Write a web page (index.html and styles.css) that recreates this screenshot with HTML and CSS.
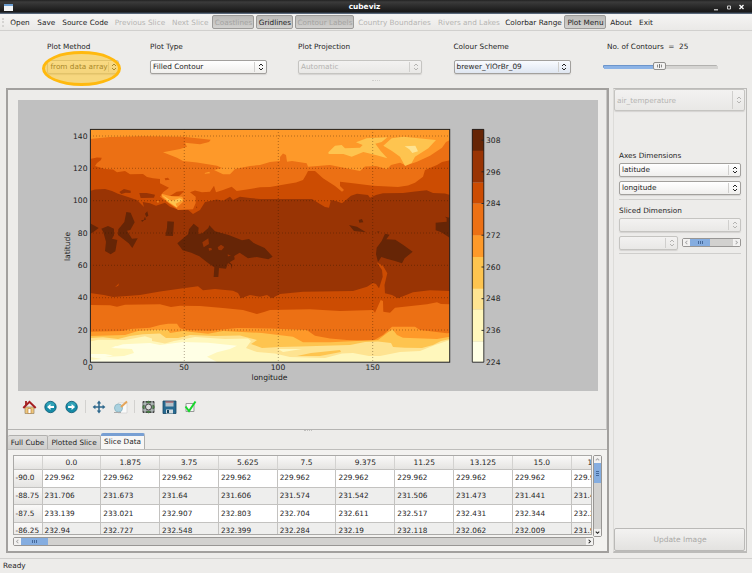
FILE: index.html
```html
<!DOCTYPE html>
<html lang="en">
<head>
<meta charset="utf-8">
<title>cubeviz</title>
<link rel="stylesheet" href="styles.css">
</head>
<body>
<svg width="0" height="0" class="defs"><defs>
<symbol id="updown" viewBox="0 0 6 8"><path d="M1 3 3 1l2 2M1 5l2 2 2-2" fill="none" stroke="currentColor" stroke-width="1"/></symbol>
</defs></svg>
<header class="titlebar">
  <svg class="app-icon" viewBox="0 0 9 7"><rect width="9" height="7" fill="#f2f4f5"/><rect width="9" height="2" fill="#6b9ed2"/></svg>
  <span class="title">cubeviz</span>
  <svg class="win-buttons" viewBox="0 0 34 10"><path d="M2 7.8h4" stroke="#ddd" stroke-width="1.2"/><path d="M15.5 4h3v3h-3z" fill="none" stroke="#ccc"/><path d="m27.500 3 4 4m0-4-4 4" stroke="#fff" stroke-width="1.3"/></svg>
</header>
<nav class="toolbar">
  <span class="grip"></span><span>Open</span><span>Save</span><span>Source Code</span><span class="off">Previous Slice</span><span class="off">Next Slice</span><span class="pressed off">Coastlines</span><span class="pressed">Gridlines</span><span class="pressed off">Contour Labels</span><span class="off">Country Boundaries</span><span class="off">Rivers and Lakes</span><span>Colorbar Range</span><span class="pressed">Plot Menu</span><span>About</span><span>Exit</span>
</nav>
<section class="params">
  <div class="param method"><label>Plot Method</label><div class="combo off"><span>from data array</span><svg><use href="#updown"/></svg></div><i class="highlight"></i></div>
  <div class="param"><label>Plot Type</label><div class="combo"><span>Filled Contour</span><svg><use href="#updown"/></svg></div></div>
  <div class="param projection"><label>Plot Projection</label><div class="combo off"><span>Automatic</span><svg><use href="#updown"/></svg></div></div>
  <div class="param"><label>Colour Scheme</label><div class="combo blue"><span>brewer_YlOrBr_09</span><svg><use href="#updown"/></svg></div></div>
  <div class="param contours"><label>No. of Contours &nbsp;= &nbsp;25</label><div class="slider"><b></b><i></i></div></div>
</section>
<div class="splitdots top"></div>
<main>
<section class="left">
  <div class="plotpane">
    <svg class="chart" viewBox="18 100 580 291">
      <rect x="18" y="100" width="580" height="291" fill="#c0c0c0"/>
      <clipPath id="axes"><rect x="90" y="129" width="360" height="233"/></clipPath>
      <g clip-path="url(#axes)">
        <rect x="90" y="129" width="360" height="233" fill="#993404"/>
        <path fill="#cc4c02" d="M90 129V191L95 189.500 105 189 112 191 118 193.700 128 197 137 200 144 207 142.700 202 150 203.300 156 205.700 165 202.700 170 206.700 177 209.300 188 209.700 193 214 200 210 205 202 210 201 216.700 199.500 223 200.700 230 196.700 233 200 240 196.700 250 198 260 199H312L320 204 325 207 329 207.700 331 200 336 201 342 203.300 346 200 351 195.700 357 193.700 368 195 370 197.700 376 195 383 193.300 403 193 415 191.500 426.700 190.300 433 193 445 193.500 450 195V129z"/>
        <path fill="#ec7014" d="M90 129V159L97 157.500 101.700 157.700 101 160 97 163 95 166 105 169 113 169.500 117 172.300 125 171 130 174.300 143 174 147 177 153 178.300 160 179 160 183.300 169 187.700 163 192.300 160 196.700 167 202 178 210 193 209.300 195.700 203V196.700L190 192.300 195 190.500 202 192.300 210 191.700 214 185.700 216 192.300 223 190 231.700 186.700 236.700 191 250 189 260 187.300 270 187 287 184 296 182.500 303 180 306 175 308 171 315 171 323 178.300 335 186 342 191.700 344 190 340 186V181.700L353 183.300 373 185.700 398 187 408 185.500 415 182.700 423 176.700 425 170 437 165 442 162 450 160.300V129z"/>
        <path fill="#fe9929" d="M90 129V139L110 137 143 136.300 183 136.700 210.700 139.700 209 142 200 144.300 185 142.700 187 146.700 180 149 163 152.300 170 155 177 157.700 183 161 197 162.500 217 165.700 222 168 214 170 223 174.300 230 174.300 235 169 250 166 260 165 270 162 280 161 280 157 283 153.500 286 155 287 161.700 292 161 306.700 163.300 308 166.700 330 165 345 168 360 171 365 166.500 376 166 387 169.300 391 165 400 162.700 406 165.500 417 161.700 430 155.700 442 147.700 446 142 450 140V129z"/>
        <g transform="translate(260 115) scale(.33333)">
          <path fill="#fec44f" d="M205 112 225 92 245 90 255 100 300 98 308 90 288 82 320 70 382 67 365 81 346 86 362 108 382 130 350 121 310 111 275 125 250 117 206 117zM370 92 395 70 430 65 528 75 505 100 465 125 455 144 435 153 420 125 396 108z"/>
          <path fill="#fee391" d="m434 94 32-2 8 17-17 5-9-11z"/>
          <path fill="#662506" d="m267 330 24 5 16 10 11 7-36-4zM296 315l10-3 4 10-12 1zM350 350l9-1-4 4zM375 356l14 3-10 14 27 1 24 16 28 20-24 20-8 15-21-7-25-7-16-5-10 15-6-23 2-20 15-20zM527 323l33-3v-10l-5-5 14 3v60l-25-16-17-6z"/>
        </g>
        <g transform="translate(50 115) scale(.33333)">
          <path fill="#662506" d="m120 325 26 14-15 11-11 8zM154 341l20-8 18 8v20l-6 10 16 4-6 34-14 9-17-10 3-28-8-28zM229 291l13 2 12 29-13 23-10 2 15 24 17-1-16 29-11-14-32-25 1-17 18-22zM292 289l3 13-6 4-4-10zM285 305l3 9-7 1zM274 315h9l-7 6zM352 319l20 1-3 43-23-1 5-24zM382 385l32-27 3-15 14-17 15 12-2 19 13-2 18-16 3-8 17 18 41 11 40 16 21-4 14 12 33 15 24 26-13 8-35-7-26 4-25-17-20 12-16-7 2 23-7 20-21-2-2 27h-14l2-29-16-11-29-22-24-11-26-7z"/>
          <path fill="#993404" d="m457 382 18-12 2 17-16 10zM503 397l10-8 10 7-8 10-9-1zM476 399h8l2 6-9 2zM208 231l14-9 20 5v7l-15-1-13 4zM268 234l22 0 25 5-3 9-40 1zM438 274l4 3-3 3z"/>
          <path fill="#662506" d="m530 425 22-6 2 14-15 9 8 7-2 14-2-14-15-8z"/>
          <path fill="#cc4c02" d="m344 190 10-2 5 6-13 2zM356 245l24-15 24-3-17 16-20 3zM195 517l12-12-2 7z"/>
          <path fill="#fe9929" d="m335 236 25 7 37 2 5 13-22 20-24-15-20-17zM464 174l14-4 2 5-15 1zM319 260l7-2-1 5z"/>
          <path fill="#fec44f" d="m336 240 14 8 14 10 25-8 10 5-22 11 5 12-25-17z"/>
        </g>
        <path fill="#cc4c02" d="M90 293 104 295 113 297 140 295 160 291.500 183 288.300 198 286.300 203 290.300 215 289 233 290.700 238 293 241 298.300 250 295 260 296.700 267 295 272 298.300 280 294 303 291.700 353 291 367 286.700 373 283 376 284 379 288.300 382.700 276.700 382 270 376.700 262.300 383 265.700 387.300 273.300 384.500 285 385 293.300 392 295 398 298.300 413 292.300 430 290.300 450 291V362H90z"/>
        <path fill="#ec7014" d="M90 305 110 305.300 117 306.700 125 304.700 160 304.300 171 307 180 305.700 200 306 223 308 243 310 257 314 264 312 270 310 310 309.300 340 311 373 310 375 312.700 380.700 300 383 301 383.300 311.700 390 312.700 395 307.700 427 304.300 437 302.300 441 304 450 304.300V362H90z"/>
        <path fill="#fe9929" d="M90 331.700 123 331 130 329 150 327.700 160 325 168 323.700 177 323.700 180 328.300 187 330 210 330.700 237 328 270 328.500 306.700 330 315 335.700 330 338.500 347 340 373 340.700 383 335 392 326.700 415 326.700 420 330 447 333.300 450 333V362H90z"/>
        <path fill="#fec44f" d="M90 336 125 335 138 331 157 329.700 168 330 170 333 183 331 208 333.700 223 331 262 333 293 336.700 303 342.300 330 342.300 378 340 388 332.300 392.700 329.500 397 335 403 337.700 437 339 450 336.700V362H90z"/>
        <path fill="#fee391" d="M90 338 103 337.300 118 339 130 336 143 334.300 160 333.500 166 338 178 338 190 335 215 336 240 335.500 257 340 251 344 262 348 280 347 300 346.500 350 345 365 342 378 341.500 391 343 393 347 405 347.700 422 348 433 345 441 341 450 339V362H90z"/>
        <path fill="#fff7bc" d="M90 341.500 98 339.700 125 340 145 336.300 152 338.500 152 341 165 343.500 174 341 195 337 225 339 248 338.500 251 341 246 348 257 352 275 353.500 290 357 325 358 342 353.500 353 353 369 356 380 356 400 352 420 351 435 345 450 340V362H90z"/>
        <path fill="#ffffe5" d="M90 354 105 354 113 355.500 105 357 124 356 134 353 132 349 111 348 123 344.300 150 343 160 345 183 342 208 342.700 237 345.700 230 349 217 352.300 207 356.700 217 362H90V360L102 359 90 357zM113 346l7 .3-2 1.300z"/>
        <path fill="#fff7bc" d="m278 349 24 0-19 3z"/>
        <path fill="#fec44f" d="m297 356 14-3 29-3 1 2-21 4z"/>
      </g>
      <g class="grid"><path d="M90 136H450M90 168.300H450M90 200.700H450M90 233H450M90 265.300H450M90 297.700H450M90 330H450M184.300 129V362M278.300 129V362M372.700 129V362"/></g>
      <rect x="90.400" y="129.400" width="359.300" height="232.800" fill="none" stroke="#222"/>
      <g>
        <path fill="#662506" d="M472 129h12v22h-12z"/><path fill="#993404" d="M472 150.700h12v32h-12z"/><path fill="#cc4c02" d="M472 182.700h12v21h-12z"/><path fill="#ec7014" d="M472 203.700h12v32h-12z"/><path fill="#fe9929" d="M472 235.300h12v22h-12z"/><path fill="#fec44f" d="M472 257h12v32h-12z"/><path fill="#fee391" d="M472 288.700h12v21h-12z"/><path fill="#fff7bc" d="M472 309.700h12v32h-12z"/><path fill="#ffffe5" d="M472 341.700h12v20.300h-12z"/>
        <path fill="none" stroke="#222" stroke-width=".9" d="M472.300 129.400h11.500v232.800h-11.500zM481.500 140.200h2.500M481.500 171.800h2.500M481.500 203.500h2.500M481.500 235.200h2.500M481.500 267h2.500M481.500 298.700h2.500M481.500 330.400h2.500"/>
      </g>
      <g class="axis end"><text x="87.500" y="138.500">140</text><text x="87.500" y="171">120</text><text x="87.500" y="203.400">100</text><text x="87.500" y="235.800">80</text><text x="87.500" y="268">60</text><text x="87.500" y="300.300">40</text><text x="87.500" y="332.700">20</text><text x="87.500" y="364.900">0</text></g>
      <g class="axis mid"><text x="90.500" y="370.300">0</text><text x="184" y="370.300">50</text><text x="278" y="370.300">100</text><text x="372.700" y="370.300">150</text><text x="269.500" y="380.400">longitude</text><text transform="translate(69.500 246.500) rotate(-90)">latitude</text></g>
      <g class="axis"><text x="486" y="142.800">308</text><text x="486" y="174.500">296</text><text x="486" y="206">284</text><text x="486" y="237.800">272</text><text x="486" y="269.500">260</text><text x="486" y="301.200">248</text><text x="486" y="333">236</text><text x="486" y="364.700">224</text></g>
    </svg>
    <svg class="plottools" viewBox="18 398 190 18">
      <path d="M25 407h9v6.500h-9z" fill="#efc67c" stroke="#9a8565" stroke-width=".7"/><path d="M28 408.500h3v5h-3z" fill="#fff" stroke="#b0762b" stroke-width=".6"/><path d="M25 401h2v4h-2z" fill="#a33"/><path d="m23.300 408 6.200-6.200 6.200 6.200" fill="none" stroke="#a51e22" stroke-width="2"/>
      <g fill="#168ba6" stroke="#0b5874" stroke-width=".8"><circle cx="50.500" cy="407" r="5.700"/><circle cx="71.600" cy="407" r="5.700"/></g>
      <g fill="#48b7c7" opacity=".55"><ellipse cx="50.500" cy="404.500" rx="4" ry="2.500"/><ellipse cx="71.600" cy="404.500" rx="4" ry="2.500"/></g>
      <path d="m47 407 3.500-3v2h3.500v2h-3.500v2zM75.100 407l-3.500-3v2h-3.500v2h3.500v2z" fill="#fff"/>
      <path d="M85.500 400v13M134.500 400v13" stroke="#d2d1cf"/>
      <path d="M99 402v10M94 407h10" stroke="#2d678c" stroke-width="1.500"/><path d="m99 400.600 2.200 2.800h-4.400zM99 413.400l2.200-2.800h-4.400zM92.600 407l2.800-2.200v4.400zM105.400 407l-2.800-2.200v4.400z" fill="#2d678c"/>
      <path d="M118 403h9v10h-9z" fill="#fafafa" stroke="#d0d0d0" stroke-width=".7"/><circle cx="118.500" cy="408" r="4" fill="#a9d1df" stroke="#91bac7"/><path d="m121 407 6-5.500" stroke="#e6a458" stroke-width="2"/><path d="M114 412.500h7" stroke="#aaa"/>
      <path d="M143 401.500h11v11h-11z" fill="#666" stroke="#444"/><path d="M145 401v12M152 401v12M142.500 404h12M142.500 410h12" stroke="#c8d2d2"/><circle cx="148.500" cy="407" r="3" fill="#ddd" stroke="#444"/><path d="m148.500 400.500 2.500 2.500h-5zM148.500 413.500l2.500-2.500h-5zM142 407l2.500-2.500v5zM155 407l-2.500-2.500v5z" fill="#497b45"/>
      <path d="M163 401h13v12.500h-13z" fill="#286a91" stroke="#164765" stroke-width=".8"/><path d="M165.500 401.500h8v5h-8z" fill="#b4c1c9"/><path d="M165.500 402h8" stroke="#a23d41"/><path d="M166 409.500h7v4h-7z" fill="#d4dce0"/><path d="M167 410h2v3h-2z" fill="#17455f"/>
      <path d="M186 403.500h8v8h-8z" fill="#f6f6f6" stroke="#999"/><path d="m185.500 406.500 3.500 4.500 6.500-9.500" fill="none" stroke="#16d72a" stroke-width="2"/>
    </svg>
  </div>
  <div class="splitdots"></div>
  <div class="tabs"><span>Full Cube</span><span>Plotted Slice</span><span class="active">Slice Data</span></div>
  <div class="tablepane">
    <div class="tablerow">
    <div class="viewport"><table>
      <colgroup><col class="head"><col span="10"></colgroup>
      <tr><th></th><th>0.0</th><th>1.875</th><th>3.75</th><th>5.625</th><th>7.5</th><th>9.375</th><th>11.25</th><th>13.125</th><th>15.0</th><th>16.875</th></tr>
      <tr><th>-90.0</th><td>229.962</td><td>229.962</td><td>229.962</td><td>229.962</td><td>229.962</td><td>229.962</td><td>229.962</td><td>229.962</td><td>229.962</td><td>229.962</td></tr>
      <tr><th>-88.75</th><td>231.706</td><td>231.673</td><td>231.64</td><td>231.606</td><td>231.574</td><td>231.542</td><td>231.506</td><td>231.473</td><td>231.441</td><td>231.41</td></tr>
      <tr><th>-87.5</th><td>233.139</td><td>233.021</td><td>232.907</td><td>232.803</td><td>232.704</td><td>232.611</td><td>232.517</td><td>232.431</td><td>232.344</td><td>232.258</td></tr>
      <tr><th>-86.25</th><td>232.94</td><td>232.727</td><td>232.548</td><td>232.399</td><td>232.284</td><td>232.19</td><td>232.118</td><td>232.062</td><td>232.009</td><td>231.956</td></tr>
    </table></div>
    <div class="scroll vertical"><svg class="btn off" viewBox="0 0 8 8"><path d="m2 5 2-2 2 2"/></svg><b></b><span></span><svg class="btn" viewBox="0 0 8 8"><path d="m2 3 2 2 2-2"/></svg></div>
    </div>
    <div class="scroll horizontal"><svg class="btn off" viewBox="0 0 8 8"><path d="M5 2 3 4l2 2"/></svg><b></b><span></span><svg class="btn" viewBox="0 0 8 8"><path d="m3 2 2 2-2 2"/></svg></div>
  </div>
</section>
<aside>
  <div class="combo big off"><span>air_temperature</span><svg><use href="#updown"/></svg></div>
  <div class="dims">
    <label>Axes Dimensions</label>
    <div class="combo"><span>latitude</span><svg><use href="#updown"/></svg></div>
    <div class="combo"><span>longitude</span><svg><use href="#updown"/></svg></div>
    <hr>
    <label>Sliced Dimension</label>
    <div class="combo off"><span></span><svg><use href="#updown"/></svg></div>
    <div class="slice"><div class="combo off"><span></span><svg><use href="#updown"/></svg></div>
    <div class="scroll horizontal"><svg class="btn off" viewBox="0 0 8 8"><path d="M5 2 3 4l2 2"/></svg><b></b><span></span><svg class="btn off" viewBox="0 0 8 8"><path d="m3 2 2 2-2 2"/></svg></div></div>
    <hr>
  </div>
  <button disabled>Update Image</button>
</aside>
</main>
<footer>Ready</footer>
</body>
</html>
```
FILE: styles.css
```css
* { box-sizing: border-box; }
body { margin: 0; width: 752px; height: 573px; overflow: hidden; background: #edecea; color: #252525; font: 7.3px/10px "DejaVu Sans", sans-serif; display: flex; flex-direction: column; white-space: nowrap; }
svg { display: block; flex: none; }
.defs { position: absolute; }
.titlebar { height: 14px; flex: none; display: grid; grid-template-columns: 40px 1fr 40px; background: linear-gradient(#222, #3b3b3b 2px, #2c2c2c 6px, #1b1b1b 11px, #19191a 12px, #3d4b5b 13px, #718096); color: #fff; align-items: center; text-align: center; }
.app-icon { width: 9px; height: 7px; margin-left: 4px; }
.title { font-weight: bold; font-size: 7.4px; padding-right: 23px; }
.win-buttons { width: 34px; height: 10px; }
.toolbar { height: 17px; flex: none; display: grid; grid-template-columns: 7px 26px 26.6px 51.4px 58px 42.5px 43px 40px 60px 80px 69px 60px 43px 29px 21px; background: linear-gradient(#f5f4f3, #eae9e7); border-bottom: 1px solid #d1d0ce; text-align: center; line-height: 17px; }
.toolbar .pressed { height: 14px; line-height: 13px; margin: 1px 0 0 1px; border: 1px solid #9c9b99; border-radius: 2px; background: linear-gradient(#bcbbb9, #d2d1cf); }
.toolbar .pressed:nth-child(8) { margin: 1px 1px 0 2px; }
.off { color: #b5b4b2; }
.toolbar .pressed.off { color: #a4a3a1; }
.grip { margin: 4px 2px; border-left: 2px dotted #d5d4d2; }
.params { height: 48px; flex: none; padding: 11px 0 0 47px; display: grid; grid-template-columns: 103px 148px 155.5px 149px 130px; }
.param { position: relative; }
.param label { display: block; height: 18px; line-height: 9px; }
.param .combo { width: 117px; }
.param.method .combo { width: 72px; }
.param.projection .combo { width: 124px; }
.combo { height: 14px; display: flex; align-items: center; border: 1px solid #a2a09d; border-radius: 2px; background: linear-gradient(#fff, #f0efed); box-shadow: 0 1px 1px #d4d3d1; }
.combo span { flex: 1; padding-left: 2px; height: 10px; line-height: 10px; border-right: 1px solid #d0cfcd; }
.combo svg { width: 6px; height: 8px; margin: 0 2.5px; }
.combo.off { background: linear-gradient(#f3f2f1, #e9e8e6); border-color: #c5c4c1; }
.combo.blue { background: linear-gradient(#f9fbff, #dfe6f1); }
.method .combo span { padding-left: 2.5px; }
.highlight { position: absolute; left: -5px; top: 9px; width: 79px; height: 35px; border: 3px solid #ffb90f; border-radius: 50%; background: rgba(255, 193, 20, .5); }
.method .combo.off { color: #504c40; }
.contours label { padding-left: 4.5px; }
.slider { position: relative; width: 114px; height: 3px; margin: 5px 0 0 .5px; border: 0; border-radius: 1px; background: linear-gradient(90deg, #6c95cb 50%, #b2b1af 50%); }
.slider::before { content: ""; display: block; width: 100%; height: 3px; border: solid transparent; border-width: 1px; background: linear-gradient(90deg, #8cb3e6 50%, #d5d4d2 50%) content-box; }
.slider b, .slider i { position: absolute; top: -3px; left: 50px; width: 13px; height: 8px; border: 1px solid #91908e; border-radius: 2px; background: #f4f3f2; }
.slider i { top: -1px; left: 54px; width: 5px; height: 4px; border: 0; background: repeating-linear-gradient(90deg, #777 0 1px, #f4f3f2 1px 2px); }
.splitdots { width: 8px; height: 3px; flex: none; margin: 0 auto; border-top: 1px dotted #c0bfbd; }
.splitdots.top { height: 9px; background: none; border-top: 0; }
.splitdots.top::before { content: ""; display: block; margin-top: 1px; border-top: 1px dotted #d0cfcd; }
main { height: 465px; flex: none; display: flex; gap: 4px; padding-left: 6px; }
.left { width: 603px; border: 2px solid #a2a09e; display: flex; flex-direction: column; background: #edecea; }
.plotpane { height: 340px; flex: none; padding: 10px 0 0 10px; border-bottom: 1px solid #b5b4b2; border-right: 1px solid #c8c7c5; }
.chart { width: 580px; height: 291px; }
.grid { fill: none; stroke: #301500; stroke-width: .7; stroke-dasharray: 1 2; opacity: .55; }
.axis { font-size: 7.6px; fill: #1b1b1b; }
.mid { text-anchor: middle; }
.end { text-anchor: end; }
.plottools { width: 190px; height: 18px; margin-top: 7px; }
.tabs { height: 16px; flex: none; display: flex; align-items: flex-end; text-align: center; }
.tabs span { height: 14px; line-height: 13px; width: 40px; background: linear-gradient(#dfdedc, #cfcecc); border: 1px solid #b0afad; border-bottom: 0; border-left: 0; border-radius: 2px 2px 0 0; }
.tabs span:nth-child(2) { width: 53px; }
.tabs .active { height: 16px; width: 44px; line-height: 12px; background: #f7f6f5; border-top: 3px solid #789fd3; }
.tablepane { flex: 1; border-top: 1px solid #bebdbb; background: #f3f2f0; padding: 5px 5px 0; }
.tablerow { display: flex; gap: 1px; }
.viewport { width: 580px; height: 80px; overflow: hidden; border: 1px solid #aaa9a7; background: #fff; }
table { table-layout: fixed; width: 616.5px; border-collapse: separate; border-spacing: 0; }
col { width: 58.8px; } col.head { width: 28.5px; }
td, th { height: 17.7px; padding: 0 0 0 2px; border: solid #c3c2c0; border-width: 0 1px 1px 0; font-size: 7.3px; line-height: 10px; font-weight: normal; text-align: left; }
tr:first-child th { height: 14px; text-align: center; padding: 0; font-size: 7.5px; border-right-color: #d3d2d0; }
tr:nth-child(odd) td { background: #eeeeed; }
th { padding-left: 1.5px; background: linear-gradient(#faf9f8, #e5e4e2); }
.scroll { display: flex; border: 1px solid #989694; border-radius: 2px; background: #d2d1cf; }
.scroll.vertical { width: 9px; height: 82px; flex-direction: column; }
.scroll.horizontal { height: 9px; width: 581px; }
.scroll span { flex: 1; }
.btn { width: 7px; height: 7px; background: #f3f2f1; fill: none; stroke: #222; stroke-width: 1.2; }
.btn.off { stroke: #aaa; }
.vertical b { height: 20px; background: repeating-linear-gradient(#45699b 0 1px, #85ade0 1px 2px) center / 3px 5px no-repeat, #85ade0; }
.horizontal b { width: 27px; background: repeating-linear-gradient(90deg, #45699b 0 1px, #85ade0 1px 2px) center / 5px 3px no-repeat, #85ade0; }
aside { width: 134px; border: 1px solid #bcbbb9; border-left-color: #dddcd9; border-width: 1px 1px 2px; display: flex; flex-direction: column; }
.combo.big { height: 22px; margin: 0 1px 1px 0; flex: none; }
.combo.big span { line-height: 20px; height: 18px; padding-left: 2px; }
.dims { padding: 38px 5px 0 5px; flex: 1; }
.dims label { display: block; height: 13px; line-height: 11px; }
.dims > .combo { width: 122px; margin-bottom: 4px; }
hr { height: 1px; margin: 0 0 5px; border: 0; background: #cfcecc; }
.slice { display: flex; justify-content: space-between; height: 17px; align-items: flex-start; }
.slice .combo { width: 59px; }
.slice .scroll.horizontal { width: 59px; margin-top: 2px; }
.slice .scroll b { width: 20px; }
button { height: 23px; margin-right: 1px; border: 1px solid #bab9b7; border-radius: 2px; background: linear-gradient(#f3f2f1, #e3e2e0); color: #aaa9a7; font: 7.5px/19px "DejaVu Sans", sans-serif; padding: 0 0 0 1px; }
footer { margin-top: 5px; height: 14px; border-top: 1px solid #d1d0ce; padding: 1px 3px; line-height: 11px; }
```
